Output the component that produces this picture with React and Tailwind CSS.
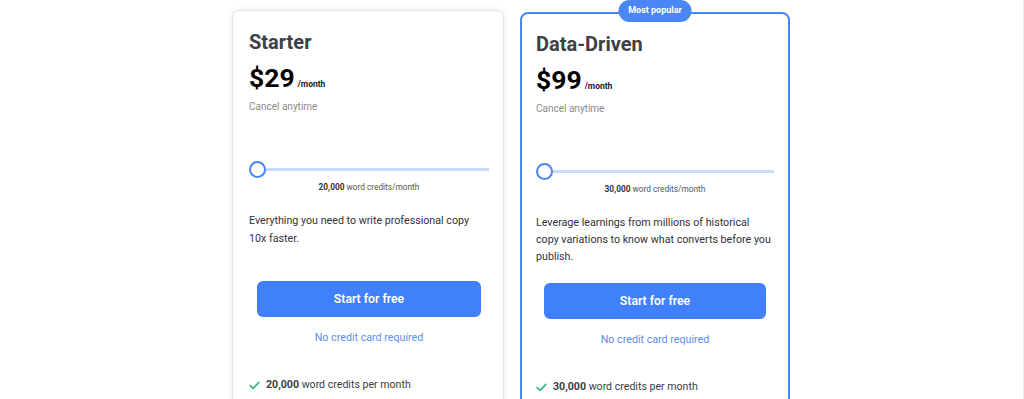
import React from "react";

function Check() {
  return (
    <svg width="11" height="9" viewBox="0 0 12 10" fill="none" className="shrink-0">
      <path d="M1.2 5.2 L4.4 8.3 L10.8 1.5" stroke="#3dbb7e" strokeWidth="2" strokeLinecap="round" strokeLinejoin="round" />
    </svg>
  );
}

function Slider({ value }) {
  return (
    <div>
      <div className="flex items-center h-4">
        <div className="w-[17px] h-[17px] rounded-full border-2 border-[#4a86f7] bg-white shrink-0"></div>
        <div className="flex-1 h-[3px] bg-[#c9dafb]"></div>
      </div>
      <div className="mt-[4px] text-center text-[8.3px] leading-3 text-[#555]">
        <span className="font-bold text-[#333]">{value}</span> word credits/month
      </div>
    </div>
  );
}

function Card({ title, price, credits, desc, featured }) {
  return (
    <div
      className={
        featured
          ? "relative w-[270px] mt-[12px] h-[420px] rounded-lg border-2 border-[#4a86f7] bg-white pl-[14px] pr-[14px] pt-[16px]"
          : "relative w-[272px] mt-[10px] h-[420px] rounded-md border border-[#e6e6e6] bg-white pl-4 pr-[14px] pt-[17px] shadow-[0_0_6px_rgba(0,0,0,0.08)]"
      }
    >
      {featured && (
        <div className="absolute left-1/2 -translate-x-1/2 top-[-14px] h-[22px] w-[73px] rounded-full bg-[#4a86f7] text-white text-[9px] font-bold flex items-center justify-center whitespace-nowrap">
          Most popular
        </div>
      )}
      <div className="text-[20px] leading-7 font-bold text-[#3d4045]">{title}</div>
      <div className="mt-[5px] flex items-baseline h-[34px]">
        <span className="text-[26.5px] leading-[34px] font-bold text-black">{price}</span>
        <span className="ml-[3px] text-[8.5px] font-bold text-[#222]">/month</span>
      </div>
      <div className="mt-[4px] text-[10px] leading-4 text-[#8b8b8b]">Cancel anytime</div>
      <div className="mt-[46px]">
        <Slider value={credits} />
      </div>
      <div
        className={
          featured
            ? "mt-[19px] min-h-[51px] text-[10.7px] leading-[17px] text-[#2f3237]"
            : "mt-[19px] min-h-[51px] text-[10.7px] leading-[17.5px] text-[#2f3237] pr-2"
        }
      >
        {desc}
      </div>
      <div className="mt-[18px] mx-2 h-9 rounded-md bg-[#4080fb] text-white text-[12.2px] font-semibold flex items-center justify-center">
        Start for free
      </div>
      <div className="mt-[13px] text-center text-[10.7px] leading-4 text-[#5b8def]">No credit card required</div>
      <div className="mt-[30px] flex items-center gap-[6px] text-[10.6px] leading-[18px] text-[#3a3d42]">
        <Check />
        <span>
          <span className="font-bold">{credits}</span> word credits per month
        </span>
      </div>
    </div>
  );
}

export default function App() {
  return (
    <div
      className="w-[1024px] h-[399px] overflow-hidden bg-white border-r border-[#ececec]"
      style={{ fontFamily: "Roboto, 'Liberation Sans', sans-serif" }}
    >
      <div className="flex items-start gap-4 pl-[232px]">
        <Card
          title="Starter"
          price="$29"
          credits="20,000"
          desc="Everything you need to write professional copy 10x faster."
        />
        <Card
          featured
          title="Data-Driven"
          price="$99"
          credits="30,000"
          desc="Leverage learnings from millions of historical copy variations to know what converts before you publish."
        />
      </div>
    </div>
  );
}
